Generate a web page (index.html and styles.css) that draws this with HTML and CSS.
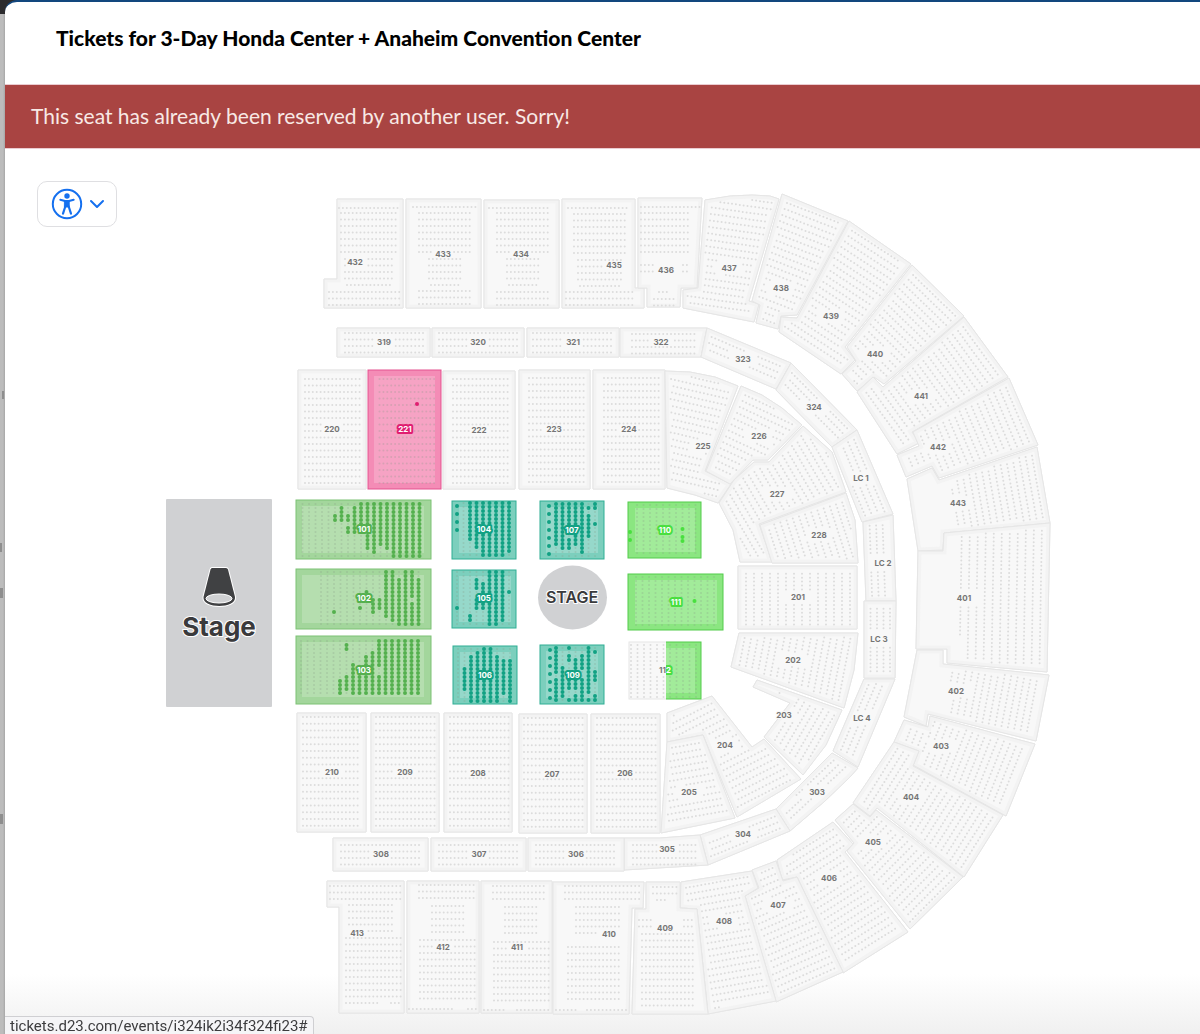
FILE: index.html
```html
<!DOCTYPE html>
<html lang="en">
<head>
<meta charset="utf-8">
<meta name="viewport" content="width=device-width, initial-scale=1">
<title>Tickets for 3-Day Honda Center + Anaheim Convention Center</title>
<link rel="stylesheet" href="styles.css">
</head>
<body>
<div class="sheet">
  <header class="sheet-header">
    <h1 class="title">Tickets for 3-Day Honda Center + Anaheim Convention Center</h1>
  </header>
  <p class="alert" role="alert">This seat has already been reserved by another user. Sorry!</p>
  <main class="map">
    <button class="a11y" type="button" aria-label="Accessibility options" aria-haspopup="true">
      <svg width="32" height="32" viewBox="0 0 32 32" fill="none" stroke="currentColor" stroke-linecap="round" stroke-linejoin="round" aria-hidden="true">
        <circle cx="16" cy="16" r="14.2" stroke-width="2"/>
        <circle cx="16" cy="8" r="2.7" fill="currentColor" stroke="none"/>
        <path d="M9.3 11.8 14 13h4l4.700-1.200" stroke-width="2"/>
        <path d="M13.800 13h4.400v6h-4.400z" fill="currentColor" stroke-width="1"/>
        <path d="m14.300 18.500-2.300 7.200m5.700-7.200 2.300 7.200" stroke-width="2.200"/>
      </svg>
      <svg width="16" height="16" viewBox="0 0 16 16" fill="none" stroke="currentColor" stroke-width="2" stroke-linecap="round" stroke-linejoin="round" aria-hidden="true">
        <path d="m2 5 6 6 6-6"/>
      </svg>
    </button>
    <svg class="arena" viewBox="5 149 1195 885" role="img" aria-label="Seating map">
      <g id="sections"></g>
      <g class="stage-block">
        <rect x="166" y="499" width="106" height="208" rx="1"/>
        <path class="lamp-edge" d="M212 568h14q1.500 0 2 1.500l7 27.500c1.500 12-33 12-31.500 0l7-27.500q.5-1.500 1.500-1.500z"/>
        <path class="lamp" d="M212 568h14q1.500 0 2 1.500l7 27.500c1.500 12-33 12-31.500 0l7-27.500q.5-1.500 1.500-1.500z"/>
        <ellipse class="lens" cx="219" cy="598.500" rx="13" ry="4.500"/>
        <text class="stage-name" x="219" y="636">Stage</text>
      </g>
      <g class="stage-block">
        <ellipse cx="572.500" cy="597.500" rx="34.500" ry="32"/>
        <text class="stage-round" x="572" y="603">STAGE</text>
      </g>
    </svg>
  </main>
</div>
<div class="status">tickets.d23.com/events/i324ik2i34f324fi23#</div>
<script src="map.js"></script>
</body>
</html>
```
FILE: styles.css
```css
* { box-sizing: border-box; }

body {
  margin: 0;
  padding-left: 5px;
  min-height: 100vh;
  background:
    linear-gradient(#2b2b2d, #2b2b2d) 0 0 / 100% 14px no-repeat,
    linear-gradient(#8e8e8e, #8e8e8e) 2px 391px / 2px 8px no-repeat,
    linear-gradient(#8e8e8e, #8e8e8e) 0 543px / 2px 9px no-repeat,
    linear-gradient(#8e8e8e, #8e8e8e) 0 588px / 3px 10px no-repeat,
    linear-gradient(#8e8e8e, #8e8e8e) 0 814px / 3px 10px no-repeat,
    linear-gradient(90deg, #bcbcbc 0 3px, #a6a6a6 5px);
  font-family: Inter, "Liberation Sans", sans-serif;
}

.sheet {
  min-height: 100vh;
  border-top: 2px solid #12477e;
  border-radius: 12px 0 0 12px;
  background: #fff;
  overflow: hidden;
}

.sheet-header { padding: 23px 51px 33px; }

.title {
  margin: 0;
  font: 900 21px/26px Lato, sans-serif;
  color: #000;
}

.alert {
  margin: 0;
  padding: 15px 26px 16px;
  border: 1px solid #ebccd1;
  border-width: 1px 0;
  background: #a94442;
  color: #f8e9e5;
  font: 400 21px/32px Lato, sans-serif;
}

.map {
  position: relative;
  background: linear-gradient(transparent calc(100% - 60px), #f0f0f0);
}

.a11y {
  position: absolute;
  top: 32px;
  left: 32px;
  display: flex;
  align-items: center;
  gap: 6px;
  padding: 6px 11px 6px 13px;
  border: 1px solid #dfdfe2;
  border-radius: 10px;
  background: #fff;
  color: #1570ef;
}

.arena { display: block; width: 100%; }

.section { fill: #f8f8f8; stroke: #e6e6e6; stroke-width: 1; }
.section-rim { fill: none; stroke: #f3f3f3; stroke-width: 7; }
.seats { fill: none; stroke: #dcdcdc; stroke-width: 2; stroke-linecap: round; }
.label { font: 700 8px Inter, sans-serif; fill: #757575; text-anchor: middle; stroke: #f8f8f8; stroke-width: 2; paint-order: stroke; }

.tier { stroke-width: 1; }
.tier-inner { fill: #fff; opacity: .2; }
.taken { fill: none; stroke: #8a9a8a; stroke-opacity: .28; stroke-width: 2; stroke-linecap: round; }
.open { fill: none; stroke-width: 4; stroke-linecap: round; }
.tag { font: 700 8px Inter, sans-serif; fill: #fff; text-anchor: middle; stroke-width: 4; stroke-linejoin: round; paint-order: stroke; }

.olive .tier { fill: #a3d69c; stroke: #7cc274; }
.olive .open, .olive .tag { stroke: #54b04e; }
.teal .tier { fill: #7ccfbd; stroke: #2fae94; }
.teal .open, .teal .tag { stroke: #11a183; }
.lime .tier { fill: #8be681; stroke: #52cc4b; }
.lime .open, .lime .tag { stroke: #49df3f; }
.pink .tier { fill: #f48cb6; stroke: #e4528f; }
.pink .open, .pink .tag { stroke: #e01e71; }

.stage-block { fill: #d0d1d3; }
.stage-block text { fill: #3a3a3c; text-anchor: middle; stroke: #fff; stroke-width: 2; paint-order: stroke; }
.stage-name { font: 700 26px Inter, sans-serif; }
.stage-round { font: 600 16px Inter, sans-serif; }
.stage-block .lamp { fill: #404143; }
.stage-block .lamp-edge { fill: none; stroke: #fff; stroke-width: 2; }
.stage-block .lens { fill: #d0d1d3; stroke: #fff; stroke-width: 1; }

.status {
  position: fixed;
  left: 5px;
  bottom: 0;
  padding: 1px 5px 0;
  border: 1px solid #cfcfd2;
  border-width: 1px 1px 0 0;
  border-radius: 0 4px 0 0;
  background: #f5f5f7;
  color: #3c3c3e;
  font: 400 15px/16px Roboto, sans-serif;
  white-space: nowrap;
}
```
FILE: map.js
```js
const NS = 'http://www.w3.org/2000/svg';
const root = document.getElementById('sections');
const PITCH = 3.9;
const ROW = 6.5;

function add(parent, tag, attrs, text) {
  const el = document.createElementNS(NS, tag);
  for (const key in attrs) el.setAttribute(key, attrs[key]);
  if (text) el.textContent = text;
  parent.appendChild(el);
  return el;
}

const dot = (x, y) => `M${x.toFixed(1)} ${y.toFixed(1)}h0`;
const rect = (x1, y1, x2, y2) => [x1, y1, x2, y1, x2, y2, x1, y2];

function pairs(flat) {
  const out = [];
  for (let i = 0; i < flat.length; i += 2) out.push([flat[i], flat[i + 1]]);
  return out;
}

// True when the point is inside the outline and at least `margin` from its edges.
function fits(x, y, pts, margin) {
  let inside = false;
  for (let i = 0, j = pts.length - 1; i < pts.length; j = i++) {
    const [ax, ay] = pts[i], [bx, by] = pts[j];
    if ((ay > y) !== (by > y) && x < (bx - ax) * (y - ay) / (by - ay) + ax) inside = !inside;
    const dx = bx - ax, dy = by - ay;
    const t = Math.max(0, Math.min(1, ((x - ax) * dx + (y - ay) * dy) / (dx * dx + dy * dy)));
    if (Math.hypot(x - ax - t * dx, y - ay - t * dy) < margin) return false;
  }
  return inside;
}

// Rows of seats at an angle, kept within the section outline.
function angledSeats(pts, { angle, minX, step }, label) {
  const a = angle * Math.PI / 180, c = Math.cos(a), s = Math.sin(a);
  const [ox, oy] = pts[0];
  let d = '';
  for (let v = -40; v <= 40; v++) {
    for (let u = -60; u <= 60; u++) {
      const x = ox + u * PITCH * c - v * step * s, y = oy + u * PITCH * s + v * step * c;
      if (x < minX || (Math.abs(x - label[0]) < 14 && Math.abs(y - label[1]) < 7)) continue;
      if (fits(x, y, pts, 4.5)) d += dot(x, y);
    }
  }
  return d;
}

// Blocks of level rows: [first x, last x, first y, rows].
function levelSeats(blocks, label, step) {
  let d = '';
  for (const [x1, x2, y1, rows] of blocks) {
    for (let r = 0; r < rows; r++) {
      for (let x = x1; x <= x2; x += PITCH) {
        const y = y1 + r * step;
        if (Math.abs(x - label[0]) < 10 && Math.abs(y - label[1]) < 5) continue;
        d += dot(x, y);
      }
    }
  }
  return d;
}

function section(name, lx, ly, flat, seats) {
  const pts = pairs(flat);
  const points = flat.join(' ');
  const id = 'clip-' + name.replace(' ', '');
  const g = add(root, 'g', {});
  add(add(g, 'clipPath', { id }), 'polygon', { points });
  add(g, 'polygon', { class: 'section', points });
  add(g, 'polygon', { class: 'section-rim', points, 'clip-path': `url(#${id})` });
  add(g, 'polygon', { class: 'section', points, 'fill-opacity': 0 });
  const d = seats.blocks ? levelSeats(seats.blocks, [lx, ly], seats.step || ROW)
    : angledSeats(pts, seats, [lx, ly]);
  add(g, 'path', { class: 'seats', d });
  add(g, 'text', { class: 'label', x: lx, y: ly + 3 }, name);
}

const rows = (...blocks) => ({ blocks });
const turn = (angle, minX = 0, step = ROW) => ({ angle, minX, step });

section('432', 355, 262, [337,199,403,199,403,308,324,308,324,279,337,279], rows([339,401,208,1],[341,397,213,7],[345,392,259,4],[347,391,285,1],[329,401,292,3]));
section('433', 443, 254, [406,199,481,199,481,308,406,308], rows([413,477,207,1],[419,472,213,7],[429,462,259,4],[431,459,285,1],[419,472,291,3]));
section('434', 521, 254, [484,200,559,200,559,308,484,308], rows([489,549,208,1],[497,550,213,7],[507,540,259,4],[509,538,285,1],[497,550,292,3]));
section('435', 614, 265, [562,199,635,199,635,288,644,288,644,308,562,308], rows([568,629,208,1],[574,627,214,7],[578,622,260,4],[580,620,286,1],[566,635,292,3]));
section('436', 666, 270, [638,198,702,198,697,288,681,288,680,307,647,307,647,288,638,288], rows([641,700,207,1],[641,691,213,7],[641,653,265,2],[683,689,265,2],[659,669,292,1],[654,676,299,2]));
section('437', 729, 268, [705,200,730,196,752,195,770,196,779,199,749,301,759,304,754,322,683,308,683,290,698,288], turn(8));
section('438', 781, 288, [782,194,848,221,797,315,781,316,778,329,756,323,760,305,752,301], turn(21));
section('439', 831, 316, [849,221,911,264,845,347,855,360,841,374,779,332,781,317,797,318], turn(33));
section('440', 875, 354, [912,265,964,316,884,384,874,377,857,391,842,374,856,361,847,347], turn(44));
section('441', 921, 396, [964,317,1008,377,912,432,919,443,897,454,857,392,873,377,883,387], turn(54));
section('442', 938, 447, [1009,378,1038,445,939,478,932,466,906,477,897,455,919,446,913,432], turn(67));
section('443', 958, 503, [1037,447,1050,523,944,533,943,550,918,551,907,479,932,468,939,480], turn(80, 952));
section('401', 964, 598, [1050,523,1047,672,947,663,947,649,916,649,918,551,943,551,944,533], turn(91, 960, 8));
section('402', 956, 691, [917,650,943,650,943,664,1049,675,1036,741,928,714,926,726,904,717], turn(101, 950));
section('403', 941, 746, [930,716,1035,744,1006,816,913,765,918,752,894,742,904,720,928,727], turn(112));
section('404', 911, 797, [894,742,919,751,913,766,1003,815,964,877,877,808,870,816,853,803], turn(122));
section('405', 873, 842, [853,804,870,817,876,810,963,877,910,929,847,851,854,843,835,820], turn(135));
section('406', 829, 878, [833,822,853,844,845,852,908,932,843,973,797,877,782,880,777,860], turn(148));
section('407', 778, 905, [752,870,776,861,783,881,797,877,843,972,776,1002,745,896,759,888], turn(156));
section('408', 724, 921, [681,882,752,871,758,888,745,896,776,1001,708,1014,697,909,680,908], turn(170));
section('409', 665, 928, [646,882,680,882,680,908,697,909,708,1014,632,1014,635,909,646,909], rows([653,677,887,2],[657,668,900,1],[639,653,920,2],[684,692,920,2],[642,695,934,12]));
section('410', 609, 934, [553,882,644,882,643,908,632,908,629,1014,553,1014], rows([565,641,886,3],[576,622,907,5],[568,622,947,9],[556,579,1010,1],[587,626,1010,1]));
section('411', 517, 947, [481,881,552,881,552,1013,481,1013], rows([493,547,886,3],[505,540,907,5],[494,549,942,10],[484,505,1010,1],[517,550,1010,1]));
section('412', 443, 947, [407,881,479,881,479,1013,407,1013], rows([419,474,885,3],[432,467,906,5],[420,475,940,10],[409,452,1009,1],[468,478,1009,1]));
section('413', 357, 933, [327,881,404,881,404,1013,339,1013,339,907,327,907], rows([330,402,886,3],[349,393,905,5],[346,402,938,10],[346,381,1003,1],[391,402,1003,1]));

section('319', 384, 342, rect(337,328,430,357), rows([345,423,333,4]));
section('320', 478, 342, rect(432,328,524,357), rows([439,518,333,4]));
section('321', 573, 342, rect(527,328,619,357), rows([533,612,333,4]));
section('322', 661, 342, [620,328,707,328,701,357,620,357], rows([632,697,334,4]));
section('323', 743, 359, [707,328,791,363,776,389,701,357], turn(23));
section('324', 814, 407, [791,363,857,430,832,447,776,390], turn(45));
section('LC 1', 861, 478, [857,430,893,514,862,522,832,447], turn(67));
section('LC 2', 883, 563, [863,522,893,515,896,601,866,601], turn(88));
section('LC 3', 879, 639, [864,601,896,601,895,678,864,678], turn(90));
section('LC 4', 862, 718, [864,679,895,679,858,767,833,751], turn(113));
section('303', 817, 792, [832,753,858,768,850,777,825,801,790,831,776,809], turn(137));
section('304', 743, 834, [776,809,790,831,708,865,700,835], turn(158));
section('305', 667, 849, [624,838,660,838,700,835,708,865,624,870], rows([633,698,845,4]));
section('306', 576, 854, rect(528,838,624,871), rows([536,615,845,4]));
section('307', 479, 854, rect(431,838,526,871), rows([439,517,845,4]));
section('308', 381, 854, rect(333,838,428,871), rows([341,419,845,4]));

section('220', 332, 429, rect(298,370,366,489), rows([305,361,379,17]));
section('222', 479, 430, rect(443,371,515,489), rows([453,509,379,17]));
section('223', 554, 429, rect(519,370,590,489), rows([529,585,378,17]));
section('224', 629, 429, rect(593,370,665,489), rows([604,660,378,17]));
section('225', 703, 446, [665,371,690,372,715,377,738,386,705,471,731,484,718,503,695,495,667,488], turn(13));
section('226', 759, 436, [741,386,762,395,782,408,802,425,768,460,753,460,730,484,706,471], turn(25));
section('227', 777, 494, [803,426,832,452,846,492,759,524,772,562,740,562,733,530,719,503,734,480,754,462,769,462], turn(60));
section('228', 819, 535, [846,493,855,520,858,563,772,563,760,525], turn(72));
section('201', 798, 597, rect(738,566,857,629), turn(90, 0, 8));
section('202', 793, 660, [739,633,858,633,854,670,844,708,731,667], turn(101));
section('203', 784, 715, [757,680,842,710,826,745,803,775,764,737,790,703,753,687], turn(120));
section('204', 725, 745, [712,696,752,747,764,739,801,779,737,817,703,735,667,742,667,713], turn(153));
section('205', 689, 792, [667,742,703,735,735,818,661,833], turn(170));
section('206', 625, 773, rect(591,714,660,833), { blocks: [[597,656,718,17]], step: 6.8 });
section('207', 552, 774, rect(519,714,587,833), { blocks: [[524,583,718,17]], step: 6.8 });
section('208', 478, 773, rect(444,713,512,832), { blocks: [[450,509,717,17]], step: 6.8 });
section('209', 405, 772, rect(371,713,439,832), { blocks: [[376,435,717,17]], step: 6.8 });
section('210', 332, 772, rect(297,713,366,832), { blocks: [[303,361,717,17]], step: 6.8 });

/* Priced blocks. `open` maps a column number to its free rows, as "first-last"
   ranges; `singles` holds free seats that stand outside the column grid. */
function priced(name, tone, lx, ly, [x1, y1, x2, y2], inner, grid, open, singles = []) {
  const g = add(root, 'g', { class: tone });
  add(g, 'rect', { class: 'tier', x: x1, y: y1, width: x2 - x1, height: y2 - y1 });
  add(g, 'rect', { class: 'tier-inner', x: inner[0], y: inner[1], width: inner[2] - inner[0], height: inner[3] - inner[1] });
  const [gx, gy, cols, dx, dy, count] = grid;
  let taken = '', free = '';
  for (let c = 0; c < cols; c++) {
    const ranges = (open[c] || '').split(',').filter(Boolean).map(r => r.split('-').map(Number));
    for (let r = 0; r < count; r++) {
      const isFree = ranges.some(([a, b = a]) => r >= a && r <= b);
      if (isFree) free += dot(gx + c * dx, gy + r * dy);
      else taken += dot(gx + c * dx, gy + r * dy);
    }
  }
  for (const [x, y] of singles) free += dot(x, y);
  add(g, 'path', { class: 'taken', d: taken });
  add(g, 'path', { class: 'open', d: free });
  add(g, 'text', { class: 'tag', x: lx, y: ly + 3 }, name);
}

priced('221', 'pink', 405, 429, [368,370,441,489], [374,376,435,483], [379.5,379,15,3.9,6.5,17], {}, [[417,404]]);
priced('101', 'olive', 364, 529, [296,500,431,559], [302,506,424,553], [302.5,504,19,6.5,4,14],
  { 5: '3-4', 6: '1-4', 7: '3-4,6-7', 8: '1-7', 9: '0-7', 10: '0-11', 11: '0-12', 12: '0-10', 13: '0-11', 14: '0-13', 15: '0-13', 16: '0-13', 17: '0-13', 18: '0-13' });
priced('102', 'olive', 364, 598, [296,569,431,629], [302,575,424,623], [321,572,16,6.5,4,14],
  { 2: '10', 6: '9', 7: '5', 8: '7-10', 9: '7-9', 10: '0-11', 11: '0-12', 12: '2-13', 13: '0-13', 14: '0-6,8-13', 15: '2-13' });
priced('103', 'olive', 364, 670, [296,636,431,704], [302,642,424,697], [301,641,19,6.5,4,14],
  { 6: '10-13', 7: '1-2,9-12', 8: '6-13', 9: '7-13', 10: '4-13', 11: '3-13', 12: '0-6,9-13', 13: '0-13', 14: '0-13', 15: '0-13', 16: '0-13', 17: '0-13', 18: '0-13' });
priced('104', 'teal', 484, 529, [452,501,516,559], [459,507,511,553], [463.5,503,8,6.5,4,14],
  { 1: '0-9', 2: '0-11', 3: '0-13', 4: '0-13', 5: '0-13', 6: '0-13', 7: '0-12' }, [[457,506],[457,514],[457,522],[457,530]]);
priced('105', 'teal', 484, 598, [452,570,516,628], [459,576,511,622], [457,572,9,6.5,4,14],
  { 0: '9', 2: '11-12', 3: '2-4,7-9', 4: '3-9', 5: '0-13', 6: '0-13', 7: '0-12', 8: '5' });
priced('106', 'teal', 485, 675, [453,646,517,704], [460,652,511,698], [458,649,9,6.5,4,14],
  { 1: '5-10', 2: '2-13', 3: '1-13', 4: '0-13', 5: '0-13', 6: '2-13', 7: '3-11', 8: '3-13' });
priced('107', 'teal', 572, 530, [540,501,604,559], [546,507,598,553], [556,504,7,6.5,4,14],
  { 0: '0-10', 1: '0-11', 2: '0-7,9-11', 3: '0-10', 4: '0-12', 5: '1,3-8', 6: '0-1,5' }, [0, 1, 2, 3, 4, 5, 6].map(i => [549, 506 + i * 8]));
priced('109', 'teal', 573, 675, [540,645,604,704], [546,651,598,698], [556,648,7,6.5,4,14],
  { 0: '0-6,8-13', 1: '5-12', 2: '0,2-3,6-10,13', 3: '3-10,12-13', 4: '2-5,8-13', 5: '0-11,13', 6: '1,6-8,12-13' }, [0, 1, 2, 3, 4, 5, 6].map(i => [550, 650 + i * 8]));
priced('110', 'lime', 665, 530, [628,502,701,558], [635,508,695,552], [637,505,10,6.5,4,13],
  { 7: '6,8-9' }, [[630,532],[630,540]]);
priced('111', 'lime', 676, 602, [628,574,723,630], [635,580,717,624], [636,577,13,6.5,4,13], { 9: '6' });
priced('112', 'lime', 665, 670, [629,642,701,699], [635,648,695,693], [631,645,11,6.5,4,14], {});

// The left part of 112 is sold out and is drawn in grey over the priced block.
const sold = add(root, 'g', {});
const left = { x: 628, y: 641, width: 38, height: 59 };
add(add(sold, 'clipPath', { id: 'sold-112' }), 'rect', left);
const half = add(sold, 'g', { 'clip-path': 'url(#sold-112)' });
add(half, 'rect', { ...left, fill: '#fff' });
add(half, 'rect', { class: 'section', x: 629, y: 642, width: 73, height: 57 });
let soldDots = '';
for (let c = 0; c < 6; c++) {
  for (let r = 0; r < 14; r++) {
    if (c < 4 || Math.abs(r - 6) > 1) soldDots += dot(631 + c * 6.5, 645 + r * 4);
  }
}
add(half, 'path', { class: 'seats', d: soldDots });
add(half, 'text', { class: 'label', x: 665, y: 673 }, '112');
```
